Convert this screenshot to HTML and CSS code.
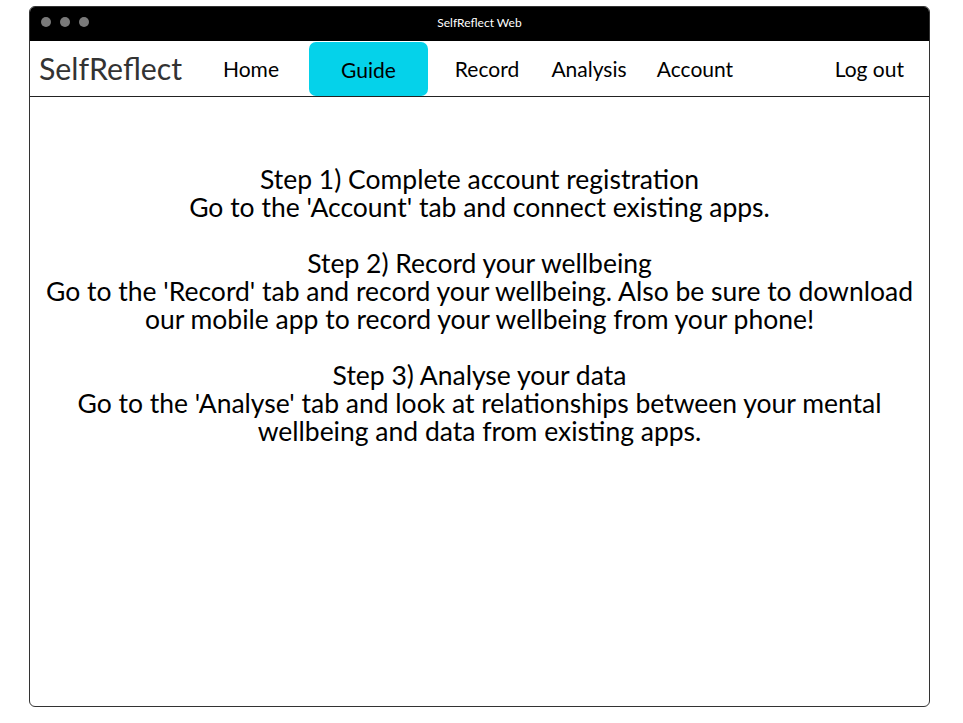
FILE: index.html
```html
<!DOCTYPE html>
<html lang="en">
<head>
<meta charset="utf-8">
<title>SelfReflect Web</title>
<link rel="stylesheet" href="styles.css">
</head>
<body>
<div class="window">
  <div class="titlebar">
    <div class="dots"><span class="dot"></span><span class="dot"></span><span class="dot"></span></div>
    <div class="title">SelfReflect Web</div>
  </div>
  <nav class="nav">
    <div class="logo">SelfReflect</div>
    <a class="item home">Home</a>
    <a class="item guide active">Guide</a>
    <a class="item record">Record</a>
    <a class="item analysis">Analysis</a>
    <a class="item account">Account</a>
    <a class="item logout">Log out</a>
  </nav>
  <main class="content">
    <p>Step 1) Complete account registration<br>Go to the 'Account' tab and connect existing apps.</p>
    <p>Step 2) Record your wellbeing<br>Go to the 'Record' tab and record your wellbeing. Also be sure to download our mobile app to record your wellbeing from your phone!</p>
    <p>Step 3) Analyse your data<br>Go to the 'Analyse' tab and look at relationships between your mental wellbeing and data from existing apps.</p>
  </main>
</div>
</body>
</html>
```
FILE: styles.css
```css
html, body {
  margin: 0;
  padding: 0;
  background: #ffffff;
}
body {
  font-family: "Lato", "Open Sans", sans-serif;
  color: #000;
}
.window {
  margin: 6px 0 0 29px;
  width: 901px;
  height: 701px;
  box-sizing: border-box;
  border: 1px solid #333;
  border-radius: 6px;
  overflow: hidden;
  display: flex;
  flex-direction: column;
}
.titlebar {
  height: 34px;
  background: #000;
  position: relative;
  display: flex;
  align-items: center;
  justify-content: center;
  flex: none;
}
.dots {
  position: absolute;
  left: 11px;
  top: 10px;
  display: flex;
  gap: 9px;
}
.dot {
  width: 10px;
  height: 10px;
  border-radius: 50%;
  background: #7a7a7a;
}
.title {
  color: #fff;
  font-size: 12px;
  margin-top: -4px;
}
.nav {
  height: 55px;
  border-bottom: 1px solid #222;
  display: flex;
  align-items: stretch;
  flex: none;
}
.logo {
  width: 171px;
  padding-left: 9px;
  font-size: 30.3px;
  color: #333;
  display: flex;
  align-items: center;
  margin-top: -2px;
}
.item {
  display: flex;
  align-items: center;
  justify-content: center;
  font-size: 21px;
  color: #000;
  cursor: pointer;
}
.home { width: 82px; }
.guide {
  width: 119px;
  margin-left: 17px;
  margin-top: 1px;
  border-radius: 7px;
}
.active { background: #05d2ea; }
.record { width: 118px; }
.analysis { width: 86px; }
.account { width: 126px; }
.logout {
  margin-left: auto;
  padding-right: 25px;
}
.content {
  padding-top: 68px;
  text-align: center;
  font-size: 26.5px;
  line-height: 28px;
}
.content p {
  margin: 0 0 28px 0;
  padding: 0 10px;
}
```
